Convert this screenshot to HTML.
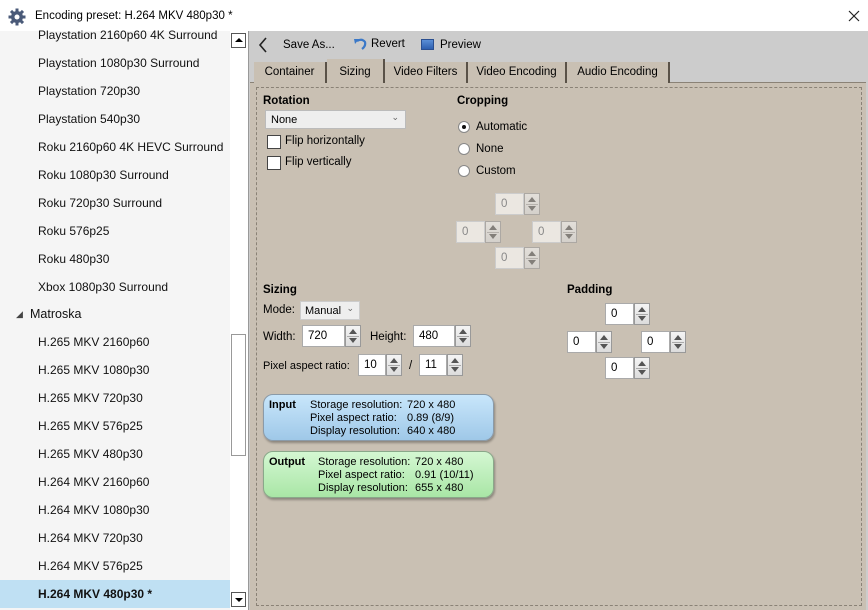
<!DOCTYPE html>
<html><head><style>
*{margin:0;padding:0;box-sizing:border-box}
body{width:868px;height:610px;overflow:hidden;background:#fff;font-family:"Liberation Sans",Tahoma,sans-serif;font-size:11.5px;color:#000;position:relative}
.a{position:absolute;white-space:nowrap}
.li{position:absolute;left:38px;font-size:12px;color:#111}
.tb{position:absolute;background:#fff;border:1px solid #aaa;padding:4px 0 0 5px;font-size:11.5px}
.tb.d{background:#ebe7e1;color:#888;border-color:#ccc}
.sp{position:absolute;width:16px;border:1px solid #999;background:linear-gradient(#f4f4f4,#dcdcdc)}
.sp:before,.sp:after{content:"";position:absolute;left:3px;border-left:4px solid transparent;border-right:4px solid transparent}
.sp:before{top:3px;border-bottom:5px solid #555}
.sp:after{bottom:3px;border-top:5px solid #555}
.sp i{position:absolute;left:1px;right:1px;top:50%;border-top:1px solid #aaa}
.tab{position:absolute;top:62px;height:21px;background:#c9c0b3;border-right:2px solid #5a5248;text-align:center;padding-top:4px;font-size:11.5px}
.b{font-weight:bold}
.rad{position:absolute;left:458px;width:12px;height:12px;border-radius:50%;background:#fff;border:1px solid #888}
.cb{position:absolute;left:267px;width:14px;height:14px;background:#fff;border:1px solid #444}
.info{position:absolute;left:263px;width:231px;height:47px;border-radius:10px;border:1px solid #8a9aa8;box-shadow:1px 2px 2px rgba(0,0,0,.3);font-size:11px;line-height:13px}
</style></head><body>
<svg class="a" style="left:8px;top:8px" width="18" height="18" viewBox="0 0 18 18"><g fill="#4a5a78"><circle cx="9" cy="9" r="6"/><rect x="7.5" y="0.5" width="3" height="17"/><rect x="0.5" y="7.5" width="17" height="3"/><rect x="7.5" y="0.5" width="3" height="17" transform="rotate(45 9 9)"/><rect x="7.5" y="0.5" width="3" height="17" transform="rotate(-45 9 9)"/></g><circle cx="9" cy="9" r="2.5" fill="#fff"/></svg>
<div class="a" style="left:35px;top:10px;font-size:11.5px">Encoding preset: H.264 MKV 480p30 *</div>
<svg class="a" style="left:848px;top:10px" width="12" height="12"><path d="M1 1L11 11M11 1L1 11" stroke="#222" stroke-width="1.2"/></svg>
<div class="a" style="left:0;top:31px;width:230px;height:579px;background:#f5f5f5"></div>
<div class="a" style="left:0;top:580px;width:230px;height:28px;background:#bfe0f3"></div>
<div class="li" style="top:28px">Playstation 2160p60 4K Surround</div>
<div class="li" style="top:56px">Playstation 1080p30 Surround</div>
<div class="li" style="top:84px">Playstation 720p30</div>
<div class="li" style="top:112px">Playstation 540p30</div>
<div class="li" style="top:140px">Roku 2160p60 4K HEVC Surround</div>
<div class="li" style="top:168px">Roku 1080p30 Surround</div>
<div class="li" style="top:196px">Roku 720p30 Surround</div>
<div class="li" style="top:224px">Roku 576p25</div>
<div class="li" style="top:252px">Roku 480p30</div>
<div class="li" style="top:280px">Xbox 1080p30 Surround</div>
<div class="a" style="left:16px;top:309px;font-size:9px;color:#444">◢</div>
<div class="li" style="top:307px;left:30px;font-size:12.5px">Matroska</div>
<div class="li" style="top:335px">H.265 MKV 2160p60</div>
<div class="li" style="top:363px">H.265 MKV 1080p30</div>
<div class="li" style="top:391px">H.265 MKV 720p30</div>
<div class="li" style="top:419px">H.265 MKV 576p25</div>
<div class="li" style="top:447px">H.265 MKV 480p30</div>
<div class="li" style="top:475px">H.264 MKV 2160p60</div>
<div class="li" style="top:503px">H.264 MKV 1080p30</div>
<div class="li" style="top:531px">H.264 MKV 720p30</div>
<div class="li" style="top:559px">H.264 MKV 576p25</div>
<div class="li b" style="top:587px">H.264 MKV 480p30 *</div>
<div class="a" style="left:231px;top:33px;width:15px;height:15px;border:1px solid #555;background:#fff"></div>
<div class="a" style="left:235px;top:38px;border-left:4px solid transparent;border-right:4px solid transparent;border-bottom:4px solid #000"></div>
<div class="a" style="left:231px;top:334px;width:15px;height:122px;border:1px solid #999;background:#fff"></div>
<div class="a" style="left:231px;top:592px;width:15px;height:15px;border:1px solid #555;background:#fff"></div>
<div class="a" style="left:235px;top:598px;border-left:4px solid transparent;border-right:4px solid transparent;border-top:4px solid #000"></div>
<div class="a" style="left:248px;top:31px;width:620px;height:579px;background:#cccccc;border-left:1px solid #999"></div>
<svg class="a" style="left:258px;top:37px" width="10" height="16"><path d="M8 1L2 8L8 15" stroke="#222" stroke-width="1.6" fill="none"/></svg>
<div class="a" style="left:283px;top:39px">Save As...</div>
<svg class="a" style="left:353px;top:37px" width="14" height="13"><path d="M4 4Q9 1 12 5Q13 9 9 12" stroke="#3a78c8" stroke-width="2.2" fill="none"/><path d="M1 2L6 2L2 7Z" fill="#3a78c8"/></svg>
<div class="a" style="left:371px;top:38px">Revert</div>
<div class="a" style="left:421px;top:39px;width:13px;height:11px;background:linear-gradient(#5b8fd6,#2d5fb0);border:1px solid #2a4f90"></div>
<div class="a" style="left:440px;top:39px">Preview</div>
<div class="a" style="left:250px;top:82px;width:616px;height:528px;background:#c9c0b3;border-top:1px solid #8a8276"></div>
<div class="tab" style="left:254px;width:73px">Container</div>
<div class="tab" style="left:327px;width:58px;top:59px;height:24px;padding-top:7px">Sizing</div>
<div class="tab" style="left:385px;width:83px">Video Filters</div>
<div class="tab" style="left:468px;width:99px">Video Encoding</div>
<div class="tab" style="left:567px;width:103px">Audio Encoding</div>
<div class="a" style="left:256px;top:87px;width:606px;height:519px;border:1px dashed #8a8276"></div>
<div class="a b" style="left:263px;top:95px">Rotation</div>
<div class="a" style="left:265px;top:110px;width:141px;height:19px;background:#eee;border:1px solid #bbb;padding:3px 0 0 5px;font-size:11px">None<span style="position:absolute;right:6px;top:1px;font-size:9px;color:#666">⌄</span></div>
<div class="cb" style="top:135px"></div><div class="a" style="left:285px;top:135px">Flip horizontally</div>
<div class="cb" style="top:156px"></div><div class="a" style="left:285px;top:156px">Flip vertically</div>
<div class="a b" style="left:457px;top:95px">Cropping</div>
<div class="rad" style="top:121px"><div style="position:absolute;left:3px;top:3px;width:4px;height:4px;border-radius:50%;background:#111"></div></div>
<div class="a" style="left:476px;top:121px">Automatic</div>
<div class="rad" style="top:143px"></div><div class="a" style="left:476px;top:143px">None</div>
<div class="rad" style="top:165px"></div><div class="a" style="left:476px;top:165px">Custom</div>
<div class="tb d" style="left:495px;top:193px;width:29px;height:22px">0</div><div class="sp" style="left:524px;top:193px;height:22px;opacity:.6"><i></i></div>
<div class="tb d" style="left:456px;top:221px;width:29px;height:22px">0</div><div class="sp" style="left:485px;top:221px;height:22px;opacity:.6"><i></i></div>
<div class="tb d" style="left:532px;top:221px;width:29px;height:22px">0</div><div class="sp" style="left:561px;top:221px;height:22px;opacity:.6"><i></i></div>
<div class="tb d" style="left:495px;top:247px;width:29px;height:22px">0</div><div class="sp" style="left:524px;top:247px;height:22px;opacity:.6"><i></i></div>
<div class="a b" style="left:263px;top:284px">Sizing</div>
<div class="a" style="left:263px;top:304px">Mode:</div>
<div class="a" style="left:300px;top:301px;width:60px;height:19px;background:#eee;border:1px solid #ccc;padding:3px 0 0 4px;font-size:11px">Manual<span style="position:absolute;right:5px;top:1px;font-size:9px;color:#666">⌄</span></div>
<div class="a" style="left:263px;top:331px">Width:</div>
<div class="tb" style="left:302px;top:325px;width:43px;height:22px">720</div><div class="sp" style="left:345px;top:325px;height:22px"><i></i></div>
<div class="a" style="left:370px;top:331px">Height:</div>
<div class="tb" style="left:413px;top:325px;width:42px;height:22px">480</div><div class="sp" style="left:455px;top:325px;height:22px"><i></i></div>
<div class="a" style="left:263px;top:360px;font-size:11px">Pixel aspect ratio:</div>
<div class="tb" style="left:358px;top:354px;width:28px;height:22px">10</div><div class="sp" style="left:386px;top:354px;height:22px"><i></i></div>
<div class="a" style="left:409px;top:360px">/</div>
<div class="tb" style="left:419px;top:354px;width:28px;height:22px">11</div><div class="sp" style="left:447px;top:354px;height:22px"><i></i></div>
<div class="a b" style="left:567px;top:284px">Padding</div>
<div class="tb" style="left:605px;top:303px;width:29px;height:22px">0</div><div class="sp" style="left:634px;top:303px;height:22px"><i></i></div>
<div class="tb" style="left:567px;top:331px;width:29px;height:22px">0</div><div class="sp" style="left:596px;top:331px;height:22px"><i></i></div>
<div class="tb" style="left:641px;top:331px;width:29px;height:22px">0</div><div class="sp" style="left:670px;top:331px;height:22px"><i></i></div>
<div class="tb" style="left:605px;top:357px;width:29px;height:22px">0</div><div class="sp" style="left:634px;top:357px;height:22px"><i></i></div>
<div class="info" style="top:394px;background:linear-gradient(#c8e6fb,#9fc8e8)"><b style="position:absolute;left:5px;top:4px">Input</b><div style="position:absolute;left:46px;top:4px">Storage resolution:<br>Pixel aspect ratio:<br>Display resolution:</div><div style="position:absolute;left:143px;top:4px">720 x 480<br>0.89 (8/9)<br>640 x 480</div></div>
<div class="info" style="top:451px;background:linear-gradient(#d4f7d2,#a9e6a6);border-color:#8aa88a"><b style="position:absolute;left:5px;top:4px">Output</b><div style="position:absolute;left:54px;top:4px">Storage resolution:<br>Pixel aspect ratio:<br>Display resolution:</div><div style="position:absolute;left:151px;top:4px">720 x 480<br>0.91 (10/11)<br>655 x 480</div></div>
</body></html>
